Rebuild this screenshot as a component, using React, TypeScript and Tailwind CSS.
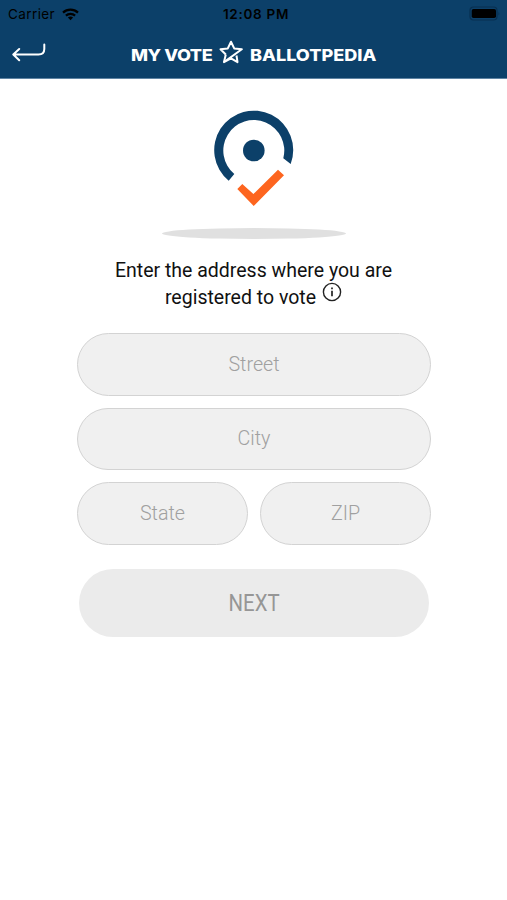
import type { ReactNode } from "react"

const fieldClass =
  "block h-[62.5px] w-full min-w-0 rounded-full border-[1.5px] border-[#d3d3d3] bg-[#f0f0f0] text-center text-[19.7px] font-light text-[#333] outline-none placeholder:text-[#a0a0a0]"

function StatusBar() {
  return (
    <div className="grid h-[28px] grid-cols-3 items-center font-['Inter',sans-serif] text-black">
      <div className="flex items-center pl-[8px]">
        <span className="text-[13.5px] tracking-[0.4px]">Carrier</span>
        <svg className="ml-[7px] h-[13px] w-[17px]" viewBox="0 0 17 13" fill="none" stroke="currentColor" strokeWidth="2.2">
          <path d="M1 4.6C5.2 .6 11.8 .6 16 4.6" />
          <path d="M3.9 7.6C6.5 5.2 10.5 5.2 13.1 7.6" />
          <path d="M5.9 9.6C7.4 8.2 9.6 8.2 11.1 9.6L8.5 12.2Z" fill="currentColor" stroke="none" />
        </svg>
      </div>
      <span className="pl-[5px] text-center text-[13.5px] font-semibold tracking-[0.7px] whitespace-nowrap">12:08 PM</span>
      <div className="flex justify-end pr-[6px]">
        <svg className="mb-[2px] h-[15px] w-[32px]" viewBox="0 0 32 15">
          <rect x="1" y="1" width="27" height="13" rx="3.5" fill="none" stroke="#082f50" strokeWidth="1.2" />
          <rect x="2.7" y="3" width="24.3" height="9" rx="1.8" fill="#000" />
          <path d="M29.5 5.5Q31 7.5 29.5 9.5Z" fill="#082f50" />
        </svg>
      </div>
    </div>
  )
}

function Brand({ children }: { children: ReactNode }) {
  return (
    <span className="mt-[3px] inline-block origin-left scale-x-[1.13] font-['Inter',sans-serif] text-[16px] leading-none font-extrabold whitespace-nowrap">
      {children}
    </span>
  )
}

export default function App() {
  return (
    <div className="flex min-h-screen flex-col bg-white font-['Roboto',sans-serif]">
      {/* Header */}
      <header className="h-[79px] border-b border-[#5f84a3] bg-[#0c4069]">
        <StatusBar />
        <div className="flex h-[50px] items-center text-white">
          <button className="w-[131px] shrink-0 pl-[12px]" aria-label="Back">
            <svg className="h-[20px] w-[34px]" viewBox="0 0 34 20" fill="none" stroke="currentColor" strokeWidth="2" strokeLinecap="round" strokeLinejoin="round">
              <path d="M7.2 6L1.3 11.5L7.2 17.2M1.8 11.5H26.5Q32.3 11.5 32.3 6V1.5" />
            </svg>
          </button>
          <div className="flex w-[81px] tracking-[-0.4px]">
            <Brand>MY VOTE</Brand>
          </div>
          <svg className="mx-[7px] mb-[3px] h-[24px] w-[24px] shrink-0" viewBox="0 0 24 24" fill="none" stroke="currentColor" strokeWidth="2" strokeLinejoin="round">
            <path d="M6.8 14.5L1.5 9.3L8.8 8.4L12 1.7L15.2 8.4L22.8 9.3L5 22.1L12 18.4L18.5 22.1L17.5 15.5" />
            <path d="M6.8 14.5L5 22.1" />
          </svg>
          <Brand>BALLOTPEDIA</Brand>
        </div>
      </header>

      <main className="flex flex-col items-center">
        {/* Logo */}
        <svg className="mt-[31px] h-[97px] w-[80px]" viewBox="214 110 80 97">
          <path d="M228.7 180.7A39.5 39.5 0 1 1 290.7 164L283.3 158.3A30.5 30.5 0 1 0 234.3 174Z" fill="#0c4069" />
          <circle cx="253.8" cy="150.5" r="10.8" fill="#0c4069" />
          <path d="M237.3 189L242.3 184L253.4 194L278 169.7L284 175.3L253.7 206Z" fill="#fd651f" />
        </svg>
        <div className="mt-[21px] h-[11px] w-[184px] rounded-[50%] bg-[#e0e0e0]" />

        <h1 className="mt-[18px] h-[54px] text-center text-[19.5px] leading-[27px] text-[#111]">
          Enter the address where you are
          <br />
          registered to vote
          <svg className="-mt-[6px] mb-[8px] ml-[6px] inline-block h-[20px] w-[20px]" viewBox="0 0 20 20" fill="none" stroke="#222">
            <circle cx="10" cy="10" r="8.6" strokeWidth="1.4" />
            <path d="M10 8.8V14.3" strokeWidth="1.7" />
            <path d="M10 5.5V7.3" strokeWidth="1.7" />
          </svg>
        </h1>

        {/* Address form */}
        <form className="ml-[1px] mt-[22px] flex w-[354px] flex-col gap-[12px]">
          <input className={fieldClass} placeholder="Street" />
          <input className={fieldClass} placeholder="City" />
          <div className="grid grid-cols-2 gap-[12px]">
            <input className={fieldClass} placeholder="State" />
            <input className={fieldClass} placeholder="ZIP" />
          </div>
          <button type="button" className="mt-[12px] h-[68px] w-[350px] self-center rounded-full bg-[#ebebeb] text-[24px] text-[#969696]">
            <span className="inline-block scale-x-[0.85]">NEXT</span>
          </button>
        </form>
      </main>
    </div>
  )
}
